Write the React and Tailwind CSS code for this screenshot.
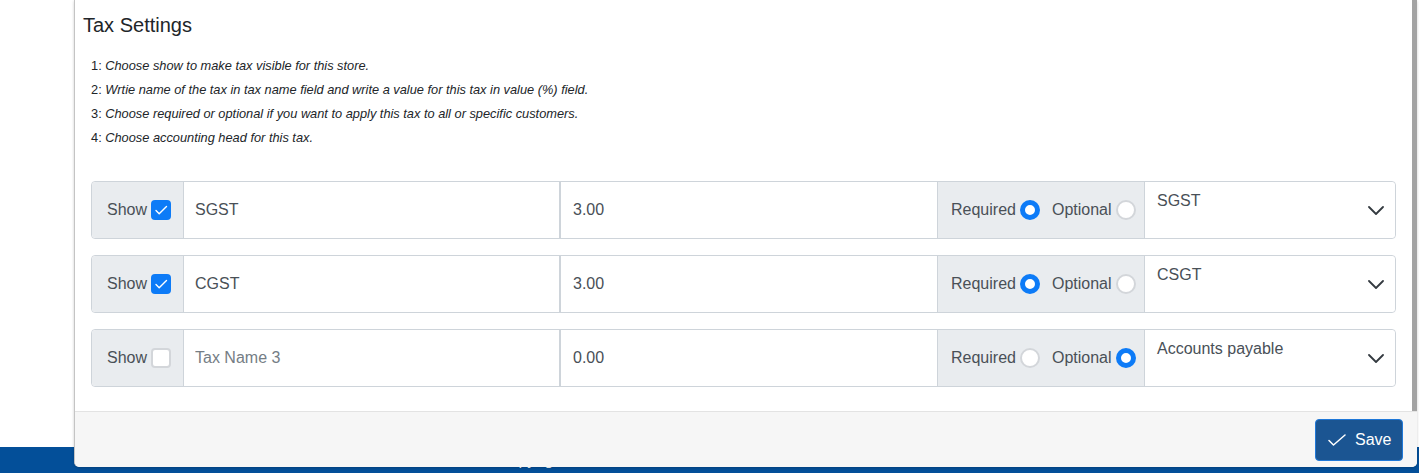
import React from "react";

const taxes = [
  { show: true, name: "SGST", value: "3.00", required: true, head: "SGST" },
  { show: true, name: "CGST", value: "3.00", required: true, head: "CSGT" },
  { show: false, name: "", value: "0.00", required: false, head: "Accounts payable", placeholder: "Tax Name 3" },
];

const notes = [
  "Choose show to make tax visible for this store.",
  "Wrtie name of the tax in tax name field and write a value for this tax in value (%) field.",
  "Choose required or optional if you want to apply this tax to all or specific customers.",
  "Choose accounting head for this tax.",
];

function Checkbox({ checked }) {
  if (!checked) {
    return <span className="block h-5 w-5 rounded-[4px] border-2 border-[#d3d6da] bg-white" />;
  }
  return (
    <span className="flex h-5 w-5 items-center justify-center rounded-[4px] bg-[#0d7bf7]">
      <svg width="16" height="16" viewBox="0 0 16 16" fill="none">
        <path d="M3 8.5l3.2 3.2L13.5 4.5" stroke="white" strokeWidth="1.4" strokeLinecap="round" strokeLinejoin="round" />
      </svg>
    </span>
  );
}

function Radio({ checked }) {
  return checked ? (
    <span className="block h-5 w-5 rounded-full border-[5px] border-[#0d7bf7] bg-white" />
  ) : (
    <span className="block h-5 w-5 rounded-full border-2 border-[#d3d6da] bg-white" />
  );
}

function TaxRow({ tax }) {
  return (
    <div className="flex h-[58px] rounded-[4px] border border-[#ced4da] text-[16px] text-[#495057]">
      {/* show addon */}
      <div className="flex w-[91px] shrink-0 items-center gap-[4px] rounded-l-[4px] bg-[#e9ecef] pl-[15px]">
        <span>Show</span>
        <Checkbox checked={tax.show} />
      </div>

      <input
        readOnly
        defaultValue={tax.name}
        placeholder={tax.placeholder}
        className="min-w-0 flex-1 border-l border-[#ced4da] bg-white pl-[11px] outline-none placeholder:text-[#757d85]"
      />
      <input
        readOnly
        defaultValue={tax.value}
        className="min-w-0 flex-1 border-l-2 border-[#ced4da] bg-white pl-3 outline-none"
      />

      {/* required / optional addon */}
      <div className="flex w-[207px] shrink-0 items-center border-l border-[#ced4da] bg-[#e9ecef] pl-[13px]">
        <span>Required</span>
        <span className="ml-[4px]">
          <Radio checked={tax.required} />
        </span>
        <span className="ml-[12px]">Optional</span>
        <span className="ml-[4px]">
          <Radio checked={!tax.required} />
        </span>
      </div>

      {/* accounting head select */}
      <div className="relative w-[251px] shrink-0 rounded-r-[4px] border-l border-[#ced4da] bg-white pl-3 pt-[7px] leading-6">
        {tax.head}
        <svg className="absolute right-[11px] top-[24px]" width="16" height="9" viewBox="0 0 16 9" fill="none">
          <path d="M1 1l7 7 7-7" stroke="#343a40" strokeWidth="1.8" strokeLinecap="round" strokeLinejoin="round" />
        </svg>
      </div>
    </div>
  );
}

export default function App() {
  return (
    <div className="relative h-[473px] w-[1419px] overflow-hidden bg-white font-['Liberation_Sans',Arial,sans-serif]">
      {/* page behind the dialog */}
      <div className="flex h-full flex-col">
        <div className="flex-1" />
        <footer className="h-[26px] bg-[#034f99] pl-[498px] text-[16px] leading-[26px] text-white">
          Copyright © 2024 Store Admin.
        </footer>
      </div>

      {/* dialog */}
      <div className="absolute left-[74px] top-0 flex w-[1343px] flex-col rounded-b-[5px] border-l border-[#c4c4c4] bg-white shadow-[0_1px_3px_rgba(0,0,0,0.2)]">
        <div className="flex h-[411px]">
          <div className="flex-1 px-2 pt-[13px] text-[#212529]">
            <h5 className="text-[20px] leading-6">Tax Settings</h5>

            <div className="px-2">
              <ul className="mt-[17px] text-[12.8px] leading-6">
                {notes.map((n, i) => (
                  <li key={i}>
                    {i + 1}: <em>{n}</em>
                  </li>
                ))}
              </ul>

              <div className="mt-[31px] flex flex-col gap-4">
                {taxes.map((t, i) => (
                  <TaxRow key={i} tax={t} />
                ))}
              </div>
            </div>
          </div>
          <div className="w-[5px] bg-[#a3a3a3]" />
        </div>

        <div className="flex h-[56px] justify-end rounded-b-[5px] border-t border-[#e3e3e3] bg-[#f6f6f6] pr-[14px] pt-[7px]">
          <button className="flex h-[42px] w-[88px] items-center gap-[9px] rounded-[4px] border border-[#1f78d8] bg-[#1b5592] pl-[12px] text-[16px] text-white">
            <svg width="18" height="12" viewBox="0 0 18 12" fill="none">
              <path d="M1 6.5l4.5 4.5L17 1" stroke="white" strokeWidth="1.5" strokeLinecap="round" strokeLinejoin="round" />
            </svg>
            Save
          </button>
        </div>
      </div>
    </div>
  );
}
